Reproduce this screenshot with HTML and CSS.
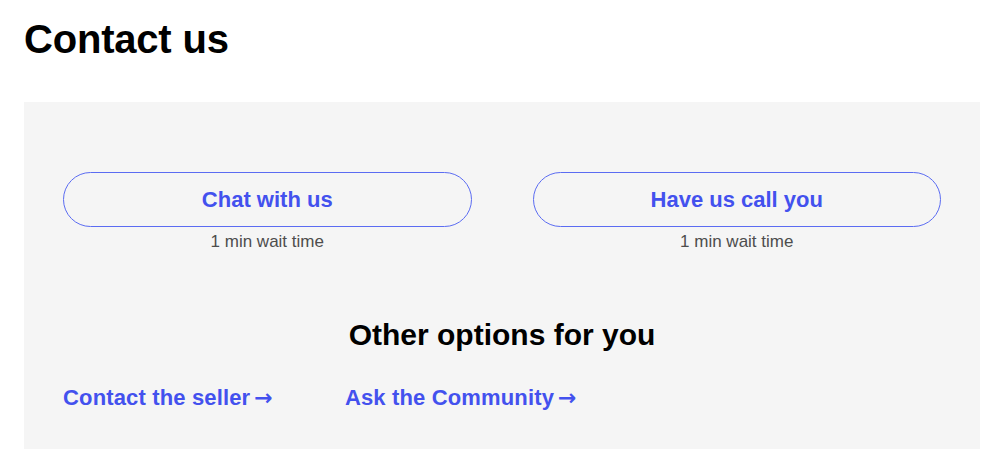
FILE: index.html
```html
<!DOCTYPE html>
<html lang="en">
<head>
<meta charset="utf-8">
<title>Contact us</title>
<link rel="stylesheet" href="styles.css">
</head>
<body>
<main class="page">
  <h1 class="title">Contact us</h1>
  <section class="panel">
    <div class="options">
      <div class="option">
        <a class="pill" href="#">Chat with us</a>
        <p class="wait">1 min wait time</p>
      </div>
      <div class="option">
        <a class="pill" href="#">Have us call you</a>
        <p class="wait">1 min wait time</p>
      </div>
    </div>
    <h2 class="subtitle">Other options for you</h2>
    <div class="links">
      <a class="link" href="#">Contact the seller<span class="arrow">→</span></a>
      <a class="link" href="#">Ask the Community<span class="arrow">→</span></a>
    </div>
  </section>
</main>
</body>
</html>
```

FILE: styles.css
```css
* { box-sizing: border-box; }

html, body {
  margin: 0;
  padding: 0;
  background: #ffffff;
  font-family: "Liberation Sans", Arial, sans-serif;
  color: #000;
}

.page {
  padding: 16px 18px 0 24px;
}

.title {
  margin: 0;
  font-size: 40px;
  line-height: 46px;
  font-weight: 700;
  letter-spacing: -0.2px;
}

.panel {
  margin-top: 40px;
  background: #f5f5f5;
  padding: 70px 39px 60px 39px;
}

.options {
  display: grid;
  grid-template-columns: 1fr 1fr;
  column-gap: 61px;
}

.option {
  display: flex;
  flex-direction: column;
  align-items: stretch;
}

.pill {
  display: flex;
  align-items: center;
  justify-content: center;
  height: 55px;
  border: 1px solid #5b6cf2;
  border-radius: 28px;
  color: #4351ee;
  font-size: 22px;
  font-weight: 700;
  text-decoration: none;
}

.wait {
  margin: 5px 0 0;
  text-align: center;
  font-size: 17px;
  line-height: 19px;
  color: #4d4d4d;
}

.subtitle {
  margin: 67px 0 0;
  text-align: center;
  font-size: 30px;
  line-height: 34px;
  font-weight: 700;
}

.links {
  display: flex;
  gap: 72px;
  margin-top: 33px;
}

.link {
  color: #4351ee;
  font-size: 22px;
  line-height: 25px;
  font-weight: 700;
  letter-spacing: 0.15px;
  text-decoration: none;
}

.arrow {
  margin-left: 4px;
  font-family: "DejaVu Sans", sans-serif;
  font-size: 22px;
}
```
